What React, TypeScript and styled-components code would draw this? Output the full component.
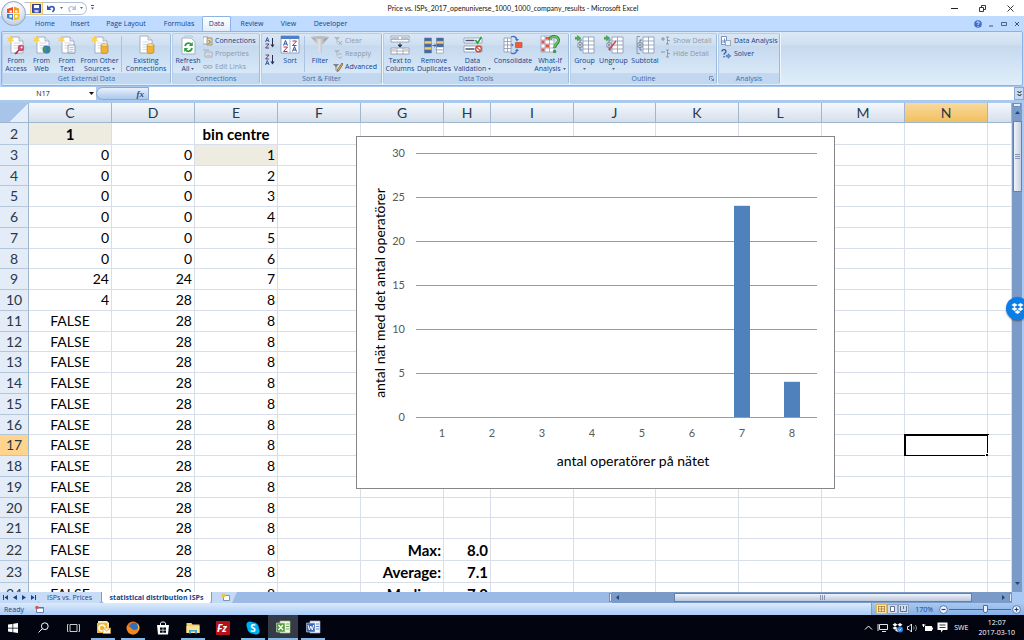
import React from "react";
import styled, { createGlobalStyle, css } from "styled-components";

const ui = `"Open Sans", "Noto Sans", sans-serif`;
const sheetFont = `Lato, "Noto Sans", sans-serif`;

const Global = createGlobalStyle`
  *, *::before, *::after { box-sizing: border-box; }
  html, body { margin: 0; height: 100%; overflow: hidden; }
  body { font-family: ${ui}; font-size: 7px; color: #15428b; background: #bfdbff; }
  button, input { font: inherit; color: inherit; border: 0; padding: 0; margin: 0; background: none; }
  button { cursor: default; }
  svg { display: block; flex: none; }
`;

const Window = styled.div`
  position: relative;
  display: flex;
  flex-direction: column;
  height: 100vh;
  overflow: hidden;
`;

/* ---------- title bar ---------- */
const TitleBar = styled.header`
  display: flex;
  align-items: center;
  height: 16px;
  padding-left: 24px;
  background: #fff;
`;
const QuickAccess = styled.div`
  display: flex;
  align-items: center;
  gap: 3px;
  width: 63px;
  height: 13px;
  padding-left: 5px;
  border: 1px solid #b4bfd0;
  border-left-color: transparent;
  border-radius: 0 7px 7px 0;
`;
const QuickButton = styled.button<{ $lit?: boolean }>`
  display: flex;
  align-items: center;
  justify-content: center;
  height: 13px;
  width: ${(p) => (p.$lit ? 13 : 11)}px;
  ${(p) => p.$lit && css`background: #ffe9a0; border: 1px solid #e8c86a;`}
`;
const Title = styled.h1`
  flex: 1;
  margin: 0;
  padding-right: 12px;
  text-align: center;
  font-size: 7px;
  font-family: Lato, sans-serif;
  font-weight: 400;
  color: #111;
`;
const WindowButtons = styled.div<{ $wide?: boolean }>`
  display: flex;
  align-items: center;
  button {
    display: flex;
    justify-content: center;
    width: ${(p) => (p.$wide ? 28 : 13)}px;
  }
`;
const OfficeButton = styled.button`
  position: absolute;
  left: 1px;
  top: 1px;
  width: 25px;
  height: 25px;
  border-radius: 50%;
  border: 1px solid #93a5c0;
  display: flex;
  align-items: center;
  justify-content: center;
  background: radial-gradient(circle at 50% 30%, #fff 20%, #d5dfec 60%, #a9bcd6 100%);
`;

/* ---------- ribbon ---------- */
const TabStrip = styled.nav`
  display: flex;
  align-items: flex-end;
  height: 15px;
  padding: 0 1px 0 26px;
  background: #bfdbff;
`;
const RibbonTab = styled.button<{ $w: number; $active?: boolean }>`
  width: ${(p) => p.$w}px;
  height: 14px;
  padding-bottom: 1px;
  line-height: 12px;
  ${(p) =>
    p.$active &&
    css`
      height: 15px;
      background: linear-gradient(#fff, #e3eefb);
      border: 1px solid #8db2e3;
      border-bottom: 0;
      border-radius: 2px 2px 0 0;
    `}
`;
const Spacer = styled.div`
  flex: 1;
`;
const Ribbon = styled.section`
  display: flex;
  height: 55px;
  margin: 0 1px;
  padding: 1px 0;
  gap: 1px;
  border: 1px solid #8db2e3;
  border-radius: 2px;
  background: linear-gradient(#dbe8f6 0, #cfdff0 25%, #c5d9ee 26%, #e0eefb 100%);
`;
const GroupBox = styled.section<{ $w: number }>`
  display: flex;
  flex-direction: column;
  width: ${(p) => p.$w}px;
  border: 1px solid #b5cde8;
  border-right-color: #9dbbdd;
  border-bottom: 0;
  border-radius: 2px;
  box-shadow: 1px 0 0 #eef5fd;
`;
const GroupBody = styled.div`
  display: flex;
  flex: 1;
  min-height: 0;
`;
const GroupTitle = styled.h2`
  display: flex;
  align-items: center;
  justify-content: center;
  position: relative;
  margin: 0;
  height: 11px;
  font-size: 7px;
  font-weight: 400;
  color: #3e6aaa;
  background: #c1d8f0;
  svg {
    position: absolute;
    right: 2px;
  }
`;
const BigButton = styled.button<{ $w: number }>`
  display: flex;
  flex-direction: column;
  align-items: center;
  width: ${(p) => p.$w}px;
  flex: none;
  padding-top: 1px;
  line-height: 8px;
  white-space: nowrap;
  text-align: center;
  & > svg {
    margin-bottom: 2px;
  }
`;
const CaretLine = styled.span`
  display: flex;
  align-items: center;
  min-height: 8px;
  gap: 2px;
`;
const SmallList = styled.div`
  display: flex;
  flex-direction: column;
`;
const SmallButton = styled.button`
  display: flex;
  align-items: center;
  gap: 2px;
  height: 13px;
  line-height: 13px;
  white-space: nowrap;
  &:disabled {
    color: #8d98a8;
  }
`;
const SortPair = styled.div`
  display: flex;
  flex-direction: column;
  align-items: center;
  gap: 5px;
  width: 16px;
  padding-top: 3px;
`;
const Divider = styled.span`
  width: 1px;
  margin: 2px 2px 1px;
  background: #a9c3e0;
`;

/* ---------- formula bar ---------- */
const FormulaBar = styled.div`
  display: flex;
  height: 17px;
  padding: 1px 0 3px;
  background: #a9c9ee;
`;
const NameBox = styled.input`
  width: 86px;
  font-size: 7px;
  text-align: center;
  color: #111;
  background: #fff;
`;
const NameDrop = styled.button`
  width: 10px;
  display: flex;
  align-items: center;
  justify-content: center;
  background: #fff;
`;
const FxArea = styled.div`
  display: flex;
  align-items: center;
  justify-content: flex-end;
  width: 53px;
  padding-right: 4px;
  background: linear-gradient(#e8f1fc, #abc8ee);
  border: 1px solid #8fa9cc;
  border-radius: 7px 0 0 7px;
  font: italic 700 9px "Liberation Serif", serif;
  color: #3a4a68;
`;
const FormulaInput = styled.input`
  flex: 1;
  min-width: 0;
  background: #fff;
`;
const ExpandButton = styled.button`
  width: 10px;
  display: flex;
  align-items: center;
  justify-content: center;
  background: #c4daf5;
  border: 1px solid #8fa9cc;
`;

/* ---------- worksheet ---------- */
const Workspace = styled.main`
  display: flex;
  flex: 1;
  min-height: 0;
`;
const SheetArea = styled.div`
  position: relative;
  flex: 1;
  min-width: 0;
  overflow: hidden;
  background: #fff;
`;
const Grid = styled.table`
  width: 100%;
  table-layout: fixed;
  border-collapse: separate;
  border-spacing: 0;
  font-family: ${sheetFont};
  font-size: 14px;
  line-height: 18px;
  color: #000;
`;
const HeadCell = styled.th<{ $active?: boolean }>`
  height: 20px;
  padding: 0;
  font-weight: 400;
  color: #27384f;
  border-right: 1px solid #9eb6ce;
  border-bottom: 1px solid #9eb6ce;
  background: ${(p) => (p.$active ? "linear-gradient(#f9d99f, #f1c15f)" : "linear-gradient(#f5f8fc, #d5dfeb)")};
`;
const Corner = styled(HeadCell)`
  background: linear-gradient(135deg, #a9c4e9 60%, #e6eef9 61%);
`;
const BodyRow = styled.tr`
  height: 21px;
  &:nth-child(4n + 3) {
    height: 20px;
  }
  &:first-child,
  &:nth-child(n + 21) {
    height: 22px;
  }
`;
const RowHead = styled.th<{ $active?: boolean }>`
  padding: 0;
  font-weight: 400;
  color: #27384f;
  border-right: 1px solid #9eb6ce;
  border-bottom: 1px solid #b4c7dc;
  background: ${(p) => (p.$active ? "#ffd58d" : "#e4ecf7")};
`;
const Cell = styled.td<{ $align?: string; $bold?: boolean; $shade?: boolean; $selected?: boolean }>`
  position: relative;
  padding: ${(p) => (p.$align === "center" ? "0" : "0 2px 0 0")};
  text-align: ${(p) => p.$align ?? "right"};
  font-weight: ${(p) => (p.$bold ? 700 : 400)};
  font-size: ${(p) => (p.$bold ? 15 : 14)}px;
  white-space: nowrap;
  border-right: 1px solid #d9dfea;
  border-bottom: 1px solid #d9dfea;
  background: ${(p) => (p.$shade ? "#eeece1" : "#fff")};
  ${(p) =>
    p.$selected &&
    css`
      outline: 2px solid #000;
      outline-offset: -1px;
    `}
`;
const FillHandle = styled.span`
  position: absolute;
  right: -2px;
  bottom: -2px;
  width: 4px;
  height: 4px;
  background: #000;
  border-top: 1px solid #fff;
  border-left: 1px solid #fff;
`;
const ChartFrame = styled.figure`
  position: absolute;
  left: 356px;
  top: 33px;
  width: 479px;
  height: 353px;
  margin: 0;
  background: #fff;
  border: 1px solid #868686;
`;
const VScroll = styled.div`
  display: flex;
  flex-direction: column;
  align-items: center;
  width: 12px;
  padding-bottom: 3px;
  background: #7a9ac8;
  border-right: 2px solid #a9c8f2;
`;
const SplitHandle = styled.span<{ $vertical?: boolean }>`
  flex: none;
  width: ${(p) => (p.$vertical ? 3 : 8)}px;
  height: ${(p) => (p.$vertical ? 9 : 4)}px;
  background: #e4eefb;
  border: 1px solid #6f8fc0;
`;
const ScrollArrow = styled.button`
  display: flex;
  align-items: center;
  justify-content: center;
  width: 10px;
  height: 11px;
`;
const VThumb = styled.div`
  display: flex;
  align-items: center;
  justify-content: center;
  width: 9px;
  height: 71px;
  margin-top: 3px;
  border: 1px solid #6580ab;
  border-radius: 1px;
  background: linear-gradient(90deg, #eef2f8, #c5d0e2);
`;

/* ---------- sheet tabs + status ---------- */
const SheetBar = styled.div`
  display: flex;
  align-items: center;
  height: 11px;
  background: #9db9e5;
`;
const TabNav = styled.div`
  display: flex;
  align-items: center;
  justify-content: space-around;
  align-self: stretch;
  width: 38px;
  background: #c3d9f6;
`;
const SheetTab = styled.button<{ $w: number; $active?: boolean }>`
  width: ${(p) => p.$w}px;
  height: 11px;
  line-height: 10px;
  white-space: nowrap;
  font-weight: ${(p) => (p.$active ? 700 : 400)};
  background: ${(p) => (p.$active ? "#fff" : "#c9dcf6")};
  border-right: 1px solid #7d9cca;
  border-radius: 0 0 3px 3px;
`;
const NewTab = styled.button`
  display: flex;
  align-items: center;
  justify-content: center;
  width: 26px;
  height: 11px;
  background: linear-gradient(115deg, #c3d9f6 80%, transparent 81%);
`;
const HScroll = styled.div`
  display: flex;
  align-items: center;
  justify-content: space-between;
  width: 400px;
  height: 11px;
  background: #7a9ac8;
`;
const HThumb = styled.div`
  display: flex;
  align-items: center;
  justify-content: center;
  width: 298px;
  height: 9px;
  margin-left: 51px;
  margin-right: 26px;
  border: 1px solid #6580ab;
  background: linear-gradient(#f0f4fa, #b9c6dc);
`;
const BarEnd = styled.span`
  width: 12px;
  align-self: stretch;
  background: #a9c8f2;
`;
const StatusBar = styled.footer`
  display: flex;
  align-items: center;
  height: 12px;
  padding: 0 3px 0 4px;
  background: linear-gradient(#dceafb, #a9ccf6);
`;
const Ready = styled.span`
  width: 31px;
`;
const Controls = styled.div`
  display: flex;
  align-items: center;
  align-self: stretch;
  margin-right: -3px;
  padding-right: 3px;
  background: linear-gradient(#a9c8f2, #86b0e6);
  border-left: 1px solid #7d9cca;
`;
const Views = styled.div`
  display: flex;
  align-items: center;
  padding: 0 6px 0 4px;
`;
const ViewButton = styled.button<{ $on?: boolean }>`
  width: 11px;
  height: 10px;
  display: flex;
  align-items: center;
  justify-content: center;
  border: 1px solid ${(p) => (p.$on ? "#e0b95a" : "#8fa6c8")};
  background: ${(p) => (p.$on ? "#ffe3a0" : "#cfdcee")};
`;
const ZoomGroup = styled.div`
  display: flex;
  align-items: center;
  gap: 1px;
`;
const ZoomValue = styled.button`
  margin-right: 5px;
`;
const ZoomRange = styled.input`
  appearance: none;
  width: 62px;
  height: 10px;
  background: linear-gradient(#4a6a9e, #4a6a9e) center / 100% 1px no-repeat;
  &::-webkit-slider-thumb {
    appearance: none;
    width: 5px;
    height: 8px;
    border: 1px solid #4a6a9e;
    border-radius: 0 0 2px 2px;
    background: #e8f1fc;
  }
`;

/* ---------- taskbar ---------- */
const Taskbar = styled.nav`
  display: flex;
  height: 25px;
  background: #02040f;
  color: #fff;
`;
const TaskButton = styled.button<{ $open?: boolean; $active?: boolean }>`
  display: flex;
  align-items: center;
  justify-content: center;
  width: 30px;
  padding: 0 1px;
  ${(p) => p.$active && css`background-color: #343a46;`}
  ${(p) =>
    p.$open &&
    css`
      background-image: linear-gradient(#86b9e8, #86b9e8);
      background-size: ${p.$active ? 30 : 24}px 2px;
      background-position: center bottom;
      background-repeat: no-repeat;
    `}
`;
const Apps = styled.div`
  display: flex;
  margin-left: -2px;
`;
const Tray = styled.div`
  display: flex;
  align-items: center;
  gap: 4px;
  padding-right: 9px;
`;
const Lang = styled.span`
  padding: 0 6px 0 2px;
`;
const Clock = styled.time`
  text-align: center;
  line-height: 10px;
`;
const DropboxBadge = styled.button`
  position: absolute;
  right: -5px;
  top: 297px;
  width: 23px;
  height: 23px;
  border-radius: 50%;
  display: flex;
  align-items: center;
  justify-content: center;
  background: #0a7ee6;
  box-shadow: 0 1px 2px rgba(0, 0, 0, 0.4);
`;

/* ---------- icons ---------- */
type IconProps = { children: React.ReactNode; w?: number; h?: number; vb?: string };
const Svg = ({ children, w = 20, h = 20, vb }: IconProps) => (
  <svg width={w} height={h} viewBox={vb ?? `0 0 ${w} ${h}`} fill="none" aria-hidden="true">
    {children}
  </svg>
);

const Down = ({ c = "#15428b" }: { c?: string }) => (
  <Svg w={5} h={3}><path d="M0 0h5L2.500 3z" fill={c} /></Svg>
);
const Caret = ({ children }: { children?: React.ReactNode }) => (
  <CaretLine>
    {children}
    <Svg w={3} h={2}><path d="M0 0h3L1.500 2z" fill="#4a6a9e" /></Svg>
  </CaretLine>
);

const Sheet = () => (
  <>
    <path d="M5 2h8l4 4v12H5z" fill="#fff" stroke="#93a1b8" strokeWidth=".8" />
    <path d="M13 2v4h4" fill="#dde5f0" stroke="#93a1b8" strokeWidth=".7" />
    <path d="M7.500 8h7M7.500 10.500h7M7.500 13h5" stroke="#c2cddd" strokeWidth=".8" />
    <path d="M4.500 0l1 3 3-1-2 2.500 2 2-3-.5-1 3-1-3-3 .5 2-2-2-2.500 3 1z" fill="#f7d25e" />
  </>
);
const Cylinder = () => (
  <>
    <path d="M11 10v7c0 2 7 2 7 0v-7z" fill="#f0b432" stroke="#b07d18" strokeWidth=".6" />
    <ellipse cx="14.500" cy="10" rx="3.500" ry="1.400" fill="#fbe08f" stroke="#b07d18" strokeWidth=".5" />
  </>
);
const AccessIcon = () => (
  <Svg>
    <Sheet />
    <circle cx="15" cy="13" r="3.200" fill="#c4506a" />
    <path d="M13 15l-4 4M10 17l1.500 1.500" stroke="#a8324e" strokeWidth="1.500" />
    <circle cx="15.600" cy="12.400" r="1" fill="#fff" />
  </Svg>
);
const WebIcon = () => (
  <Svg>
    <Sheet />
    <circle cx="14.500" cy="14.500" r="4" fill="#3c7cb0" />
    <path d="M12 12c2-1.500 3 0 2 1.500s1 2 0 3.500c-2-.5-3-3-2-5zM16 12l2 2-1 2z" fill="#43a047" />
  </Svg>
);
const TextIcon = () => (
  <Svg>
    <Sheet />
    <path d="M11 10h7v8h-7z" fill="#f3f6fa" stroke="#7d8ba3" strokeWidth=".7" />
    <path d="M12.500 12.500h4M12.500 14.500h4M12.500 16.500h3" stroke="#a8b5c9" strokeWidth=".7" />
  </Svg>
);
const SourceIcon = () => (<Svg><Sheet /><Cylinder /></Svg>);
const ExistingIcon = () => (
  <Svg>
    <path d="M4 1h8l4 4v13H4z" fill="#fff" stroke="#93a1b8" strokeWidth=".8" />
    <path d="M12 1v4h4" fill="#dde5f0" stroke="#93a1b8" strokeWidth=".7" />
    <path d="M6.500 7h6M6.500 9.500h4M6.500 12h4M6.500 14.500h4" stroke="#c8d2e0" strokeWidth=".8" />
    <Cylinder />
  </Svg>
);
const RefreshIcon = () => (
  <Svg>
    <path d="M4 3h9l4 4v12H4z" fill="#fff" stroke="#93a1b8" strokeWidth=".8" />
    <path d="M6 1h8l2 2" stroke="#b4c0d2" strokeWidth=".8" />
    <path d="M7 11c1-3.500 5-3.500 6.500-1.500M14 13c-1 4-5 4-6.500 1.800" stroke="#2f9e3e" strokeWidth="1.800" />
    <path d="M14.800 7v4h-4zM6.200 17v-4h4z" fill="#2f9e3e" />
  </Svg>
);
const SortIcon = () => (
  <Svg>
    <path d="M1 1h18v17H1z" fill="#fff" stroke="#7c93b8" strokeWidth=".8" />
    <path d="M1 1h18v3H1z" fill="#4f7fc4" />
    <path d="M10 4v14" stroke="#8fa5c6" strokeWidth=".8" />
    <path d="M3.500 10.500L5.500 5.500l2 5M4.200 9h2.600M12.500 16.500l2-5 2 5M13.200 15h2.600" stroke="#2c4f9e" strokeWidth="1" />
    <path d="M3.500 12h4l-4 4.500h4M12.500 6h4l-4 4.500h4" stroke="#b03050" strokeWidth="1" />
  </Svg>
);
const AZ = ({ flip }: { flip?: boolean }) => (
  <Svg w={10} h={12}>
    <g transform={flip ? "translate(0 6)" : undefined}>
      <path d="M.5 5l1.800-4.500L4.100 5M1.200 3.600h2.200" stroke="#2c4f9e" strokeWidth=".9" />
    </g>
    <g transform={flip ? "translate(0 -6)" : undefined}>
      <path d="M.6 7h3.400L.6 11H4" stroke="#5a3050" strokeWidth=".9" />
    </g>
    <path d="M7.500 1v8" stroke="#26324c" strokeWidth="1" />
    <path d="M5.500 7.500h4l-2 3z" fill="#26324c" />
  </Svg>
);
const FunnelIcon = () => (
  <Svg>
    <defs>
      <linearGradient id="fn" x1="0" x2="1"><stop stopColor="#85878b" /><stop offset=".45" stopColor="#e2e4e6" /><stop offset="1" stopColor="#77797d" /></linearGradient>
    </defs>
    <path d="M1 2h18l-7 8v8l-4-2v-6z" fill="url(#fn)" />
    <ellipse cx="10" cy="2.500" rx="9" ry="1.500" fill="#b9bcc0" />
  </Svg>
);
const SmallFunnel = ({ kind }: { kind: "clear" | "reapply" | "advanced" }) => (
  <Svg w={10} h={10}>
    {kind === "advanced" ? (
      <>
        <path d="M0 2h6L3.500 5v4L2.500 8V5z" fill="#7d838c" />
        <path d="M9 1L4.500 7.500 4 9.500l2-1L10 2z" fill="#efb544" stroke="#4c3b20" strokeWidth=".6" />
      </>
    ) : (
      <>
        <path d="M1 1h6L4.500 4v4l-1-1V4z" fill="#b3bac4" />
        {kind === "clear"
          ? <path d="M5.500 5l3.500 4M9 5L5.500 9" stroke="#a4acb8" strokeWidth="1" />
          : <path d="M5 6c1-2 3-1.500 3.500 0M9 7.500c-.8 2-3 2-3.800.5" stroke="#a4acb8" strokeWidth=".9" />}
      </>
    )}
  </Svg>
);
const TextColsIcon = () => (
  <Svg>
    <path d="M1 1h18v6H1zM1 13h18v6H1z" fill="#fff" stroke="#8796b0" strokeWidth=".8" />
    <path d="M2 2h7v2H2zM11 2h7v2h-7z" fill="#b9c4d6" />
    <path d="M1 16h18M7 13v6M13 13v6M1 4.500h18" stroke="#8796b0" strokeWidth=".7" />
    <path d="M2 14h4v1.500H2zM14 14h4v1.500h-4z" fill="#f2c9a0" />
    <path d="M10 8v3M8 10h4l-2 2.200z" stroke="#26324c" strokeWidth=".8" fill="#26324c" />
  </Svg>
);
const DupIcon = () => (
  <Svg>
    {[3, 6, 9, 12, 15].map((y, i) => (
      <rect key={y} x="0.500" y={y} width="7" height="3" fill={i % 2 ? "#f5cf62" : "#3f66b0"} stroke="#6c7c98" strokeWidth=".5" />
    ))}
    {[3, 6, 9, 12, 15].map((y, i) => (
      <rect key={y} x="12.500" y={y} width="7" height="3" fill={["#3f66b0", "#f5cf62", "#3f66b0", "#fff", "#fff"][i]} stroke="#6c7c98" strokeWidth=".5" />
    ))}
    <path d="M8.500 10.500h3M10.300 9l1.700 1.500-1.700 1.500" stroke="#2c4f9e" strokeWidth=".9" />
  </Svg>
);
const ValidIcon = () => (
  <Svg>
    <path d="M1 3h18v5H1zM1 11h18v6H1z" fill="#fff" stroke="#8796b0" strokeWidth=".8" />
    <path d="M2.500 5.500h9M2.500 14h9" stroke="#44536e" strokeWidth="1.600" />
    <path d="M12.500 5l2 3 4-6" stroke="#2f9e3e" strokeWidth="1.700" />
    <circle cx="15.500" cy="14" r="2.800" fill="#fff" stroke="#d0402c" strokeWidth="1.300" />
    <path d="M13.600 12.200l3.800 3.600" stroke="#d0402c" strokeWidth="1.100" />
  </Svg>
);
const ConsolIcon = () => (
  <Svg>
    <path d="M1 3h7v14H1zM1 6.500h7M1 10h7M1 13.500h7M4.500 3v14" fill="#fff" stroke="#8796b0" strokeWidth=".8" />
    <path d="M12.500 7.500H19v5h-6.500z" fill="#ef5a34" stroke="#b84420" strokeWidth=".6" />
    <path d="M8 2c3-1.500 5 0 6 2.500M8 18c3 1.500 5 0 6-2.500" stroke="#4a72bc" strokeWidth="1.400" />
    <path d="M12 4h4l-2 2.500zM12 16h4l-2-2.500zM8.500 8.500L11 10l-2.500 1.500z" fill="#4a72bc" />
  </Svg>
);
const WhatIfIcon = () => (
  <Svg>
    <path d="M1 1h13v16H1zM1 5h13M1 9h13M1 13h13M5 1v16M9.500 1v16" fill="#fff" stroke="#8796b0" strokeWidth=".7" />
    <path d="M1.500 5.500h3v3h-3zM5.500 9.500h3.500v3H5.500zM5.500 2h3.500v2.500H5.500zM1.500 13.500h3v3h-3z" fill="#e2543e" />
    <path d="M10 5c0-5 9-4.500 8.500.5 0 3-3.800 3.500-3.800 7.500" stroke="#2d8a35" strokeWidth="3" />
    <path d="M10.200 5c0-4.500 8.400-4.200 8 .4 0 3-3.600 3.500-3.600 7" stroke="#79c36a" strokeWidth="1.500" />
    <circle cx="14.600" cy="16.500" r="1.800" fill="#3f9e44" />
  </Svg>
);
const OutlineIcon = ({ kind }: { kind: "group" | "ungroup" | "subtotal" }) => (
  <Svg>
    <path d="M8 2h11v16H8zM8 6h11M8 10h11M8 14h11M13.500 2v16" fill="#fff" stroke="#8796b0" strokeWidth=".8" />
    <path d="M5 5v10h2M5 5h2" stroke="#55647f" strokeWidth=".8" />
    <rect x="3" y="8" width="4" height="4" fill="#fff" stroke="#55647f" strokeWidth=".7" />
    <path d="M4 10h2M5 9v2" stroke="#26324c" strokeWidth=".6" />
    {kind !== "subtotal" && <path d="M0 2.200h2.500V.5L6 3.200 2.500 6V4.200H0z" fill="#4caf50" stroke="#2d7a32" strokeWidth=".4" />}
    {kind === "ungroup" && <path d="M5 15L12 6" stroke="#d84040" strokeWidth="1.500" />}
    {kind === "subtotal" && <path d="M2 1.500v17M2 1.500h3M2 18.500h3" stroke="#6c7c98" strokeWidth=".7" />}
  </Svg>
);
const ConnIcon = () => (
  <Svg w={10} h={10}>
    <path d="M0 1h5v7H0z" fill="#fff" stroke="#7d8ba3" strokeWidth=".7" />
    <path d="M4 2h5v7H4z" fill="#e8d9a0" stroke="#8a7a50" strokeWidth=".7" />
    <path d="M5.500 4l2 2-2 2" stroke="#3a5fa8" strokeWidth=".9" />
  </Svg>
);
const PropIcon = () => (
  <Svg w={10} h={10}>
    <path d="M0 1h6M2 3h7v5H2z" stroke="#a4acb8" strokeWidth="1" fill="#e4e9f0" />
    <path d="M3.500 5h4M3.500 6.500h4" stroke="#a4acb8" strokeWidth=".6" />
  </Svg>
);
const LinkIcon = () => (
  <Svg w={10} h={10}>
    <rect x=".5" y="3.500" width="4" height="2.600" rx="1.200" stroke="#9aa4b4" />
    <rect x="5" y="3.500" width="4" height="2.600" rx="1.200" stroke="#9aa4b4" />
  </Svg>
);
const DetailIcon = ({ minus }: { minus?: boolean }) => (
  <Svg w={10} h={10}>
    <path d={minus ? "M0 3h4" : "M0 3h4M2 1v4"} stroke="#8793a6" strokeWidth="1" />
    <path d="M5 1h3M6.500 1v7M5 8h3M7 4.500h2" stroke="#8793a6" strokeWidth=".9" />
  </Svg>
);
const AnalysisIcon = () => (
  <Svg w={11} h={10}>
    <path d="M.5.500h5v8h-5z" fill="#fff" stroke="#5d7bb0" strokeWidth=".8" />
    <path d="M2 7V4M3.500 7V2.500" stroke="#4a72bc" strokeWidth=".8" />
    <path d="M4.500 4.500h5v5h-5z" fill="#eef3fa" stroke="#7d8ba3" strokeWidth=".7" />
  </Svg>
);
const SolverIcon = () => (
  <Svg w={11} h={10}>
    <path d="M1 2.500C1 0 5 0 5 2.500c0 1.500-2 1.500-2 3.200" stroke="#2c55a8" strokeWidth="1.300" />
    <circle cx="3" cy="7.800" r=".8" fill="#2c55a8" />
    <path d="M5 6.200h2V4.600l3 2.400-3 2.400V7.800H5z" fill="#6f97d8" stroke="#2c55a8" strokeWidth=".4" />
  </Svg>
);
const DropboxMark = () => (
  <Svg w={13} h={13} vb="0 0 26 26">
    <path d="M7 2l6 4-6 4-6-4zM19 2l6 4-6 4-6-4zM7 10l6 4-6 4-6-4zM19 10l6 4-6 4-6-4zM13 16l6 4-6 4-6-4z" fill="#fff" />
  </Svg>
);
const OfficeLogo = () => (
  <Svg w={17} h={17}>
    <path d="M2 4l6-2v6H2z" fill="#e8502a" /><path d="M9 1.500l5 2V8H9z" fill="#f59a23" />
    <path d="M2 9h6v6l-6-2z" fill="#3f7fd0" /><path d="M9 9h6l-1 5-5 1.500z" fill="#f5bd2a" />
    <path d="M4.500 5.500H7v2H4.500zM10 5.500h2.500v2H10zM4.500 10H7v2.500H4.500zM10 10h2.500v2.500H10z" fill="#fff" />
  </Svg>
);

/* ---------- data ---------- */
const columns = ["C", "D", "E", "F", "G", "H", "I", "J", "K", "L", "M", "N"];
const widths = [83, 83, 83, 83, 83, 47, 83, 82, 83, 83, 83, 83];
const rows = Array.from({ length: 23 }, (_, i) => i + 2);

const cumulative = (r: number) => (r < 9 ? "0" : r === 9 ? "24" : "28");
const summary: Record<number, [string, string]> = {
  22: ["Max:", "8.0"],
  23: ["Average:", "7.1"],
  24: ["Median:", "7.0"],
};

function cellText(col: string, r: number): string {
  if (r === 2) return col === "C" ? "1" : col === "E" ? "bin centre" : "";
  if (col === "C") return r < 9 ? "0" : r === 9 ? "24" : r === 10 ? "4" : "FALSE";
  if (col === "D") return cumulative(r);
  if (col === "E") return String(Math.min(r - 2, 8));
  if (summary[r] && col === "G") return summary[r][0];
  if (summary[r] && col === "H") return summary[r][1];
  return "";
}

const Worksheet = () => (
  <Grid>
    <colgroup>
      <col style={{ width: 29 }} />
      {widths.map((w, i) => <col key={i} style={{ width: w }} />)}
      <col />
    </colgroup>
    <thead>
      <tr>
        <Corner aria-label="Select all" />
        {columns.map((c) => <HeadCell key={c} scope="col" $active={c === "N"}>{c}</HeadCell>)}
        <HeadCell />
      </tr>
    </thead>
    <tbody>
      {rows.map((r) => (
        <BodyRow key={r}>
          <RowHead scope="row" $active={r === 17}>{r}</RowHead>
          {columns.map((c) => (
            <Cell
              key={c}
              $align={r === 2 || (c === "C" && r > 10) ? "center" : "right"}
              $bold={r === 2 || c === "G" || c === "H"}
              $shade={(c === "C" && r === 2) || (c === "E" && r === 3)}
              $selected={c === "N" && r === 17}
            >
              {cellText(c, r)}
              {c === "N" && r === 17 && <FillHandle />}
            </Cell>
          ))}
          <Cell />
        </BodyRow>
      ))}
    </tbody>
  </Grid>
);

const bars = [0, 0, 0, 0, 0, 0, 24, 4];
const Chart = () => (
  <ChartFrame aria-label="Histogram of operators per network">
    <svg width="477" height="351" viewBox="0 0 477 351" fontFamily={sheetFont}>
      {[30, 25, 20, 15, 10, 5, 0].map((v, i) => (
        <g key={v}>
          <path d={`M59 ${16.5 + i * 44}H460`} stroke="#9a9a9a" />
          <text x="48" y={20 + i * 44} fontSize="11" fill="#595959" textAnchor="end">{v}</text>
        </g>
      ))}
      {bars.map((v, i) => (
        <g key={i}>
          {v > 0 && <rect x={77 + i * 50} y={280 - v * 8.8} width="16" height={v * 8.8} fill="#4f81bd" />}
          <text x={85 + i * 50} y="300" fontSize="11" fill="#595959" textAnchor="middle">{i + 1}</text>
        </g>
      ))}
      <text x="276" y="329" fontSize="14" fill="#000" textAnchor="middle">antal operatörer på nätet</text>
      <text transform="translate(28 156) rotate(-90)" fontSize="14" fill="#000" textAnchor="middle">
        antal nät med det antal operatörer
      </text>
    </svg>
  </ChartFrame>
);

const ribbonTabs: [string, number][] = [
  ["Home", 38], ["Insert", 32], ["Page Layout", 60], ["Formulas", 46],
  ["Data", 29], ["Review", 42], ["View", 31], ["Developer", 53],
];

const Minus = () => <Svg w={7} h={7}><path d="M0 3.500h7" stroke="#222" /></Svg>;
const Restore = () => <Svg w={7} h={7}><path d="M.5 2.500h4v4h-4zM2.500 2.500v-2h4v4h-2" stroke="#222" strokeWidth=".9" /></Svg>;
const Cross = () => <Svg w={7} h={7}><path d="M.5.500l6 6M6.500.500l-6 6" stroke="#222" strokeWidth=".9" /></Svg>;

export default function App() {
  return (
    <Window>
      <Global />
      <TitleBar>
        <QuickAccess>
          <QuickButton $lit aria-label="Save">
            <Svg w={9} h={9}><path d="M.5.500h8v8h-8z" fill="#4656b8" stroke="#2c3a8a" /><path d="M2 1h5v3H2z" fill="#fff" /><path d="M2.500 6h4v2.500h-4z" fill="#c4cdf0" /></Svg>
          </QuickButton>
          <QuickButton aria-label="Undo">
            <Svg w={9} h={9}><path d="M2 4c2-2.500 6-1.500 5 2L5.500 8" stroke="#2f55b8" strokeWidth="1.600" /><path d="M0 1v5h4.500z" fill="#2f55b8" /></Svg>
          </QuickButton>
          <Caret />
          <QuickButton aria-label="Redo" disabled>
            <Svg w={9} h={9}><path d="M7 4c-2-2.500-6-1.500-5 2l1.500 2" stroke="#b9c3d4" strokeWidth="1.300" /><path d="M9 1v5H4.500z" fill="#b9c3d4" /></Svg>
          </QuickButton>
          <Caret />
        </QuickAccess>
        <QuickButton aria-label="Customize"><Svg w={5} h={6}><path d="M1 .5h3" stroke="#44536e" /><path d="M1 2.500h3L2.500 4.500z" fill="#44536e" /></Svg></QuickButton>
        <Title>Price vs. ISPs_2017_openuniverse_1000_1000_company_results - Microsoft Excel</Title>
        <WindowButtons $wide>
          <button aria-label="Minimize"><Minus /></button>
          <button aria-label="Restore"><Restore /></button>
          <button aria-label="Close"><Cross /></button>
        </WindowButtons>
      </TitleBar>

      <TabStrip>
        {ribbonTabs.map(([t, w]) => <RibbonTab key={t} $w={w} $active={t === "Data"}>{t}</RibbonTab>)}
        <Spacer />
        <WindowButtons>
          <button aria-label="Help"><Svg w={8} h={14}><circle cx="4" cy="7" r="3.800" fill="#3f6fd0" /><path d="M2.800 6c0-1.800 2.600-1.600 2.400 0-.1.800-1.200.8-1.200 2M4 9v.8" stroke="#fff" strokeWidth=".9" /></Svg></button>
          <button aria-label="Minimize workbook"><Svg w={6} h={14}><path d="M1 9h4" stroke="#44536e" /></Svg></button>
          <button aria-label="Restore workbook"><Svg w={6} h={14}><path d="M.5 5.500h5v3h-5z" stroke="#44536e" strokeWidth=".9" /></Svg></button>
          <button aria-label="Close workbook"><Svg w={6} h={14}><path d="M1 5l4 4M5 5L1 9" stroke="#44536e" /></Svg></button>
        </WindowButtons>
      </TabStrip>

      <Ribbon>
        <GroupBox $w={169}>
          <GroupBody>
            <BigButton $w={26}><AccessIcon /><span>From</span><span>Access</span></BigButton>
            <BigButton $w={25}><WebIcon /><span>From</span><span>Web</span></BigButton>
            <BigButton $w={26}><TextIcon /><span>From</span><span>Text</span></BigButton>
            <BigButton $w={39}><SourceIcon /><span>From Other</span><Caret>Sources</Caret></BigButton>
            <Divider />
            <BigButton $w={44}><ExistingIcon /><span>Existing</span><span>Connections</span></BigButton>
          </GroupBody>
          <GroupTitle>Get External Data</GroupTitle>
        </GroupBox>
        <GroupBox $w={88}>
          <GroupBody>
            <BigButton $w={30}><RefreshIcon /><span>Refresh</span><Caret>All</Caret></BigButton>
            <SmallList>
              <SmallButton><ConnIcon />Connections</SmallButton>
              <SmallButton disabled><PropIcon />Properties</SmallButton>
              <SmallButton disabled><LinkIcon />Edit Links</SmallButton>
            </SmallList>
          </GroupBody>
          <GroupTitle>Connections</GroupTitle>
        </GroupBox>
        <GroupBox $w={121}>
          <GroupBody>
            <SortPair><AZ /><AZ flip /></SortPair>
            <BigButton $w={24}><SortIcon />Sort</BigButton>
            <Divider />
            <BigButton $w={26}><FunnelIcon />Filter</BigButton>
            <SmallList>
              <SmallButton disabled><SmallFunnel kind="clear" />Clear</SmallButton>
              <SmallButton disabled><SmallFunnel kind="reapply" />Reapply</SmallButton>
              <SmallButton><SmallFunnel kind="advanced" />Advanced</SmallButton>
            </SmallList>
          </GroupBody>
          <GroupTitle>Sort &amp; Filter</GroupTitle>
        </GroupBox>
        <GroupBox $w={186}>
          <GroupBody>
            <BigButton $w={32}><TextColsIcon /><span>Text to</span><span>Columns</span></BigButton>
            <BigButton $w={36}><DupIcon /><span>Remove</span><span>Duplicates</span></BigButton>
            <BigButton $w={41}><ValidIcon /><span>Data</span><Caret>Validation</Caret></BigButton>
            <BigButton $w={40}><ConsolIcon />Consolidate</BigButton>
            <BigButton $w={34}><WhatIfIcon /><span>What-If</span><Caret>Analysis</Caret></BigButton>
          </GroupBody>
          <GroupTitle>Data Tools</GroupTitle>
        </GroupBox>
        <GroupBox $w={147}>
          <GroupBody>
            <BigButton $w={27}><OutlineIcon kind="group" /><span>Group</span><Caret /></BigButton>
            <BigButton $w={31}><OutlineIcon kind="ungroup" /><span>Ungroup</span><Caret /></BigButton>
            <BigButton $w={32}><OutlineIcon kind="subtotal" />Subtotal</BigButton>
            <SmallList>
              <SmallButton disabled><DetailIcon />Show Detail</SmallButton>
              <SmallButton disabled><DetailIcon minus />Hide Detail</SmallButton>
            </SmallList>
          </GroupBody>
          <GroupTitle>
            Outline
            <Svg w={5} h={5}><path d="M.5 4V.500H4M2 2l2.500 2.500M4.500 2.500v2h-2" stroke="#5d7bb0" strokeWidth=".8" /></Svg>
          </GroupTitle>
        </GroupBox>
        <GroupBox $w={62}>
          <GroupBody>
            <Indent>
              <SmallButton><AnalysisIcon />Data Analysis</SmallButton>
              <SmallButton><SolverIcon />Solver</SmallButton>
            </Indent>
          </GroupBody>
          <GroupTitle>Analysis</GroupTitle>
        </GroupBox>
      </Ribbon>

      <FormulaBar>
        <NameBox aria-label="Name box" defaultValue="N17" />
        <NameDrop aria-label="Names"><Down c="#111" /></NameDrop>
        <FxArea>fx</FxArea>
        <FormulaInput aria-label="Formula" />
        <ExpandButton aria-label="Expand formula bar">
          <Svg w={5} h={7}><path d="M.5 1l2 2 2-2M.5 4l2 2 2-2" stroke="#111" /></Svg>
        </ExpandButton>
      </FormulaBar>

      <Workspace>
        <SheetArea>
          <Worksheet />
          <Chart />
        </SheetArea>
        <VScroll>
          <SplitHandle />
          <ScrollArrow aria-label="Scroll up"><Svg w={5} h={3}><path d="M0 3h5L2.500 0z" fill="#27427a" /></Svg></ScrollArrow>
          <VThumb><Svg w={5} h={5}><path d="M0 .5h5M0 2.500h5M0 4.500h5" stroke="#8796b0" /></Svg></VThumb>
          <Spacer />
          <ScrollArrow aria-label="Scroll down"><Down c="#27427a" /></ScrollArrow>
        </VScroll>
      </Workspace>

      <SheetBar>
        <TabNav>
          <Svg w={5} h={5}><path d="M.5 0v5" stroke="#15428b" /><path d="M5 0v5L1.500 2.500z" fill="#15428b" /></Svg>
          <Svg w={4} h={5}><path d="M4 0v5L0 2.500z" fill="#15428b" /></Svg>
          <Svg w={4} h={5}><path d="M0 0v5l4-2.500z" fill="#15428b" /></Svg>
          <Svg w={5} h={5}><path d="M4.500 0v5" stroke="#15428b" /><path d="M0 0v5l3.500-2.500z" fill="#15428b" /></Svg>
        </TabNav>
        <SheetTab $w={64}>ISPs vs. Prices</SheetTab>
        <SheetTab $w={110} $active>statistical distribution ISPs</SheetTab>
        <NewTab aria-label="Insert worksheet">
          <Svg w={9} h={9}><path d="M2.500 2.500h6v5h-6z" fill="#fff" stroke="#6c7c98" strokeWidth=".8" /><circle cx="2.500" cy="2.500" r="2" fill="#f5bd4a" /></Svg>
        </NewTab>
        <Spacer />
        <SplitHandle $vertical />
        <HScroll>
          <ScrollArrow aria-label="Scroll left"><Svg w={3} h={5}><path d="M3 0v5L0 2.500z" fill="#27427a" /></Svg></ScrollArrow>
          <HThumb><Svg w={5} h={5}><path d="M.5 0v5M2.500 0v5M4.500 0v5" stroke="#8796b0" /></Svg></HThumb>
          <ScrollArrow aria-label="Scroll right"><Svg w={3} h={5}><path d="M0 0v5l3-2.500z" fill="#27427a" /></Svg></ScrollArrow>
          <SplitHandle $vertical />
        </HScroll>
        <BarEnd />
      </SheetBar>

      <StatusBar>
        <Ready>Ready</Ready>
        <Svg w={9} h={9}><path d="M1.500 2.500h7v5h-7z" fill="#fff" stroke="#4a6a9e" strokeWidth=".8" /><path d="M1.500 2h7v1.500h-7z" fill="#4a72bc" /><circle cx="2" cy="2.500" r="1.800" fill="#e2543e" /></Svg>
        <Spacer />
        <Controls>
          <Views>
            <ViewButton $on aria-label="Normal"><Svg w={7} h={6}><path d="M0 .5h7M0 3h7M0 5.500h7M.5 0v6M3.500 0v6M6.500 0v6" stroke="#8a6a3a" strokeWidth=".6" /></Svg></ViewButton>
            <ViewButton aria-label="Page layout"><Svg w={7} h={6}><path d="M1.500.500h4v5h-4z" fill="#fff" stroke="#55647f" strokeWidth=".9" /></Svg></ViewButton>
            <ViewButton aria-label="Page break"><Svg w={7} h={6}><path d="M.5 0v5.500h6V0M3.500 0v3" stroke="#55647f" strokeWidth=".9" /></Svg></ViewButton>
          </Views>
          <ZoomGroup>
            <ZoomValue>170%</ZoomValue>
            <button aria-label="Zoom out"><Svg w={9} h={9}><circle cx="4.500" cy="4.500" r="3.900" fill="#eef4fc" stroke="#4a6a9e" strokeWidth=".9" /><path d="M2.500 4.500h4" stroke="#27427a" strokeWidth="1.200" /></Svg></button>
            <ZoomRange type="range" aria-label="Zoom" min={0} max={100} defaultValue={60} />
            <button aria-label="Zoom in"><Svg w={9} h={9}><circle cx="4.500" cy="4.500" r="3.900" fill="#eef4fc" stroke="#4a6a9e" strokeWidth=".9" /><path d="M2.500 4.500h4M4.500 2.500v4" stroke="#27427a" strokeWidth="1.200" /></Svg></button>
          </ZoomGroup>
        </Controls>
      </StatusBar>

      <Taskbar>
        <Apps>
          <TaskButton aria-label="Start"><Svg w={10} h={10}><path d="M0 1.500L4.500.900v3.800H0zM5.200.800L10 .1v4.600H5.200zM0 5.400h4.500v3.800L0 8.600zM5.200 5.400H10V10l-4.800-.7z" fill="#fff" /></Svg></TaskButton>
          <TaskButton aria-label="Search"><Svg w={11} h={11}><circle cx="6.800" cy="4.200" r="3.400" stroke="#fff" /><path d="M4.400 6.600L.5 10.500" stroke="#fff" /></Svg></TaskButton>
          <TaskButton aria-label="Task view"><Svg w={13} h={10}><path d="M3 1.500h7v7H3z" stroke="#e0e0e0" strokeWidth=".9" /><path d="M1.500 1.500h-1v7h1M11.500 1.500h1v7h-1" stroke="#e0e0e0" strokeWidth=".9" /></Svg></TaskButton>
          <TaskButton $open aria-label="Outlook"><Svg w={15} h={15}><path d="M2 1h9l2 2v9H2z" fill="#fbe7a6" /><path d="M1 3h10v10H1z" fill="#f2b632" /><circle cx="6" cy="8" r="3" stroke="#fff" strokeWidth="1.600" /><path d="M7 8h7.500v5.500H7z" fill="#fff8e0" stroke="#d99a1c" strokeWidth=".6" /><path d="M7 8l3.700 3L14.500 8" stroke="#d99a1c" strokeWidth=".7" /></Svg></TaskButton>
          <TaskButton $open aria-label="Firefox"><Svg w={14} h={14}><circle cx="7" cy="7" r="6.500" fill="#e8701a" /><circle cx="7.800" cy="6" r="4.200" fill="#2f6fc0" /><path d="M1 5c1 1 2 .5 3.500 1.500S6 9 8.500 9s3.500-1 4-3.500c1.500 4-2 8-5.500 8S0 10 1 5z" fill="#f08a1e" /><path d="M11 2c2.500 2 3 5 1.500 8-.2-3-.5-5-1.500-8z" fill="#fbc53a" /></Svg></TaskButton>
          <TaskButton aria-label="Store"><Svg w={14} h={14}><path d="M1 4h12l-1 9.500H2z" fill="#fff" /><path d="M4.500 4V2.200C4.500.500 9.500.500 9.500 2.200V4" stroke="#fff" /><path d="M4 6.500h2.700v2.300H4zM7.300 6.500H10v2.300H7.300zM4 9.400h2.700v2.300H4zM7.300 9.400H10v2.300H7.300z" fill="#02040f" /></Svg></TaskButton>
          <TaskButton $open aria-label="File Explorer"><Svg w={14} h={14}><path d="M.5 2h5l1 1.500h7V12H.500z" fill="#f6d067" /><path d="M.5 5h13v7H.500z" fill="#fbe38f" /><path d="M3 12.500V9h8v3.500H9V10.500H5v2z" fill="#4aa3d8" /></Svg></TaskButton>
          <TaskButton aria-label="FileZilla"><Svg w={14} h={14}><rect width="14" height="14" rx="1" fill="#b5121b" /><text x="1" y="11" fontSize="10" fontWeight="700" fontStyle="italic" fill="#fff">Fz</text></Svg></TaskButton>
          <TaskButton $open aria-label="Skype"><Svg w={14} h={14}><circle cx="7" cy="7" r="5.800" fill="#00aff0" /><circle cx="4" cy="4" r="3.600" fill="#00aff0" /><circle cx="10" cy="10" r="3.600" fill="#00aff0" /><text x="7" y="10.500" textAnchor="middle" fontSize="10" fontWeight="700" fill="#fff">S</text></Svg></TaskButton>
          <TaskButton $open $active aria-label="Excel"><Svg w={15} h={15}><path d="M4 1h10v12H4z" fill="#f4faef" stroke="#8fb77a" strokeWidth=".7" /><path d="M10 4h3M10 6.500h3M10 9h3" stroke="#6aa84f" /><path d="M.5 3h8.500v9H.500z" fill="#4f9a3c" stroke="#cfe6c4" strokeWidth=".6" /><path d="M2.500 5l4.500 5M7 5l-4.500 5" stroke="#fff" strokeWidth="1.400" /></Svg></TaskButton>
          <TaskButton $open aria-label="Word"><Svg w={15} h={15}><path d="M4 1h10v12H4z" fill="#f2f6fc" stroke="#8aa3cc" strokeWidth=".7" /><path d="M10 4h3M10 6.500h3M10 9h3" stroke="#5b82c4" /><path d="M.5 3h8.500v9H.500z" fill="#3c66b4" stroke="#cddaf0" strokeWidth=".6" /><path d="M2 5l1.300 5L4.800 6l1.500 4L7.600 5" stroke="#fff" strokeWidth="1" /></Svg></TaskButton>
        </Apps>
        <Spacer />
        <Tray>
          <Svg w={9} h={9}><path d="M1 6.500L4.500 3 8 6.500" stroke="#fff" /></Svg>
          <Svg w={11} h={10}><path d="M2.500 1.500h8v5h-8zM5 8.500h4M1 1v7" stroke="#fff" strokeWidth=".9" /></Svg>
          <Svg w={11} h={11}><path d="M3 1l2.500 1.700L3 4.400.500 2.700zM8 1l2.500 1.700L8 4.400 5.500 2.700zM3 4.400l2.500 1.700L3 7.800.500 6.100zM5.500 6.500L8 8.200 5.500 9.900 3 8.200z" fill="#fff" /><circle cx="8" cy="7.500" r="3" fill="#2a7fe0" /><path d="M6.700 7.500l1 1 1.600-2" stroke="#fff" strokeWidth=".8" /></Svg>
          <Svg w={11} h={10}><path d="M.5 3.500h1.500L4.500 1v8L2 6.500H.500z" stroke="#fff" strokeWidth=".9" /><path d="M6.500 3.500c.8 1 .8 2 0 3M8.300 2c1.500 2 1.500 4 0 6" stroke="#b8b8b8" strokeWidth=".8" /></Svg>
          <Svg w={11} h={10}><path d="M3 3h7v5H3z" fill="#fff" /><path d="M1.500 1v3M0 2h3.500M10.500 4.500v2" stroke="#fff" /></Svg>
          <Svg w={11} h={11}><path d="M.5.500h10v7.500H6L4 10.500V8H.500z" fill="#fff" /><path d="M2.500 3h6M2.500 5.500h6" stroke="#02040f" strokeWidth=".8" /></Svg>
          <Lang>SWE</Lang>
          <Clock>12:07<br />2017-03-10</Clock>
        </Tray>
      </Taskbar>

      <OfficeButton aria-label="Office"><OfficeLogo /></OfficeButton>
      <DropboxBadge aria-label="Dropbox"><DropboxMark /></DropboxBadge>
    </Window>
  );
}

const Indent = styled(SmallList)`
  padding-left: 2px;
`;
